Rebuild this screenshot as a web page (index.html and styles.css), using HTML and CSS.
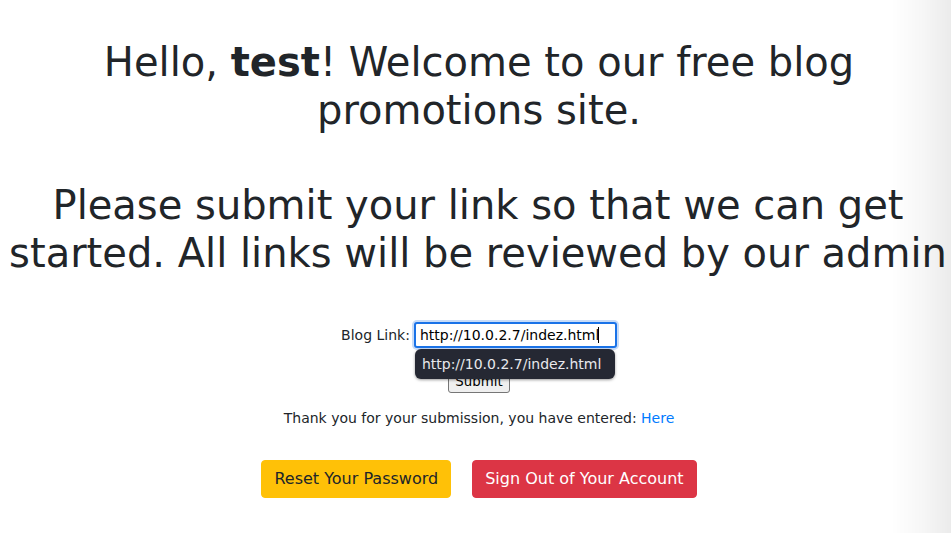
FILE: index.html
```html
<!DOCTYPE html>
<html lang="en">
<head>
<meta charset="utf-8">
<title>Blog Promotions</title>
<link rel="stylesheet" href="styles.css">
</head>
<body>
<main class="page">
  <h1 class="title">Hello, <b>test</b>! Welcome to our free blog promotions site.</h1>
  <h1 class="title second">Please submit your link so that we can get started. All links will be reviewed by our admin</h1>
  <form class="form">
    <div class="field-row">
      <label class="label" for="link">Blog Link:</label>
      <span class="input-wrap">
        <input class="input" id="link" type="text" value="http://10.0.2.7/indez.html">
        <span class="caret"></span>
        <span class="autofill">http://10.0.2.7/indez.html</span>
      </span>
    </div>
    <button class="submit" type="button">Submit</button>
  </form>
  <p class="thanks">Thank you for your submission, you have entered: <a class="link" href="#">Here</a></p>
  <div class="actions">
    <a class="btn btn-warning" href="#">Reset Your Password</a>
    <a class="btn btn-danger" href="#">Sign Out of Your Account</a>
  </div>
</main>
<div class="edge-shadow"></div>
</body>
</html>
```
FILE: styles.css
```css
* { box-sizing: border-box; }
html, body { margin: 0; padding: 0; background: #fff; }
body {
  font-family: "DejaVu Sans", sans-serif;
  color: #212529;
  font-size: 16px;
  line-height: 1.5;
  overflow: hidden;
}
.page {
  text-align: center;
  padding-top: 38px;
  padding-left: 7px;
}
.title {
  font-size: 40px;
  font-weight: 400;
  line-height: 48px;
  margin: 0;
  padding: 0 60px;
}
.title b { font-weight: 700; }
.title.second {
  margin-top: 47px;
  padding: 0;
  margin-left: -12px;
  margin-right: -10px;
}
.form {
  margin-top: 43px;
  display: flex;
  flex-direction: column;
  align-items: center;
}
.field-row {
  display: flex;
  align-items: center;
  justify-content: center;
  font-size: 14px;
  height: 30px;
  margin-right: 0;
}
.label { margin-right: 4px; }
.input-wrap { position: relative; display: inline-block; }
.input {
  width: 203px;
  height: 26px;
  font-family: "DejaVu Sans", sans-serif;
  font-size: 14px;
  color: #000;
  padding: 1px 4px;
  border: 2px solid #1a73e8;
  border-radius: 3px;
  box-shadow: 0 0 0 2px #c8dcf8;
  outline: none;
  background: #fff;
}
.caret {
  position: absolute;
  left: 184px;
  top: 5px;
  width: 1px;
  height: 16px;
  background: #000;
}
.autofill {
  position: absolute;
  left: 1px;
  top: 27px;
  width: 200px;
  height: 30px;
  background: #252833;
  color: #e8e8ec;
  border-radius: 6px;
  box-shadow: 0 1px 3px rgba(0,0,0,0.4);
  font-size: 14px;
  line-height: 30px;
  text-align: left;
  padding-left: 7px;
  z-index: 2;
}
.submit {
  font-family: "DejaVu Sans", sans-serif;
  font-size: 13.33px;
  margin-top: 20px;
  margin-left: 0;
  padding: 1px 6px;
  height: 23px;
  background: #efefef;
  border: 1px solid #767676;
  border-radius: 3px;
  color: #000;
}
.thanks {
  font-size: 14px;
  margin: 15px 0 0;
  line-height: 21px;
}
.link { color: #007bff; text-decoration: none; }
.actions {
  margin-top: 31px;
  display: flex;
  justify-content: center;
  gap: 21px;
}
.btn {
  display: inline-block;
  font-size: 16px;
  line-height: 24px;
  padding: 6px 12px 6px;
  border-radius: 4px;
  text-decoration: none;
  border: 1px solid transparent;
}
.btn-warning { background: #ffc107; border-color: #ffc107; color: #212529; }
.btn-danger { background: #dc3545; border-color: #dc3545; color: #fff; }
.edge-shadow {
  position: fixed;
  top: 0;
  right: 0;
  width: 60px;
  height: 100%;
  background: linear-gradient(to right, rgba(0,0,0,0) 0%, rgba(0,0,0,0.03) 50%, rgba(0,0,0,0.08) 100%);
  pointer-events: none;
}
```
